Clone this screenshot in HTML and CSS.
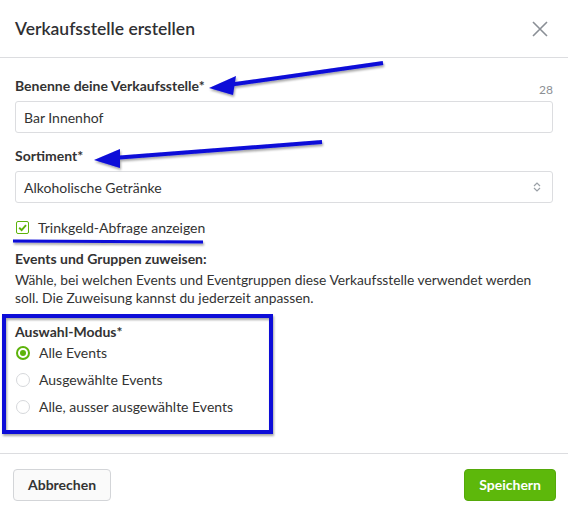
FILE: index.html
```html
<!doctype html>
<html>
<head>
    <meta charset="utf-8">
    <title>Verkaufsstelle erstellen</title>
    <link rel="stylesheet" href="styles.css">
</head>
<body>
<div class="modal">
    <div class="modal-header">
        <div class="modal-title">Verkaufsstelle erstellen</div>
        <button class="close" aria-label="Schliessen">
            <svg width="18" height="18" viewBox="0 0 18 18"><path d="M2 2L16 16M16 2L2 16" stroke="#8a8f96" stroke-width="1.6" fill="none"/></svg>
        </button>
    </div>

    <div class="modal-body">
        <div class="field">
            <div class="label-row">
                <label class="label" for="name">Benenne deine Verkaufsstelle*</label>
                <span class="counter">28</span>
            </div>
            <input class="input" id="name" type="text" value="Bar Innenhof">
        </div>

        <div class="field">
            <div class="label-row">
                <label class="label" for="sortiment">Sortiment*</label>
            </div>
            <div class="select">
                <span>Alkoholische Getränke</span>
                <svg width="8" height="12" viewBox="0 0 8 12"><path d="M1 5L4 2L7 5M1 7L4 10L7 7" stroke="#9aa0a6" stroke-width="1.2" fill="none"/></svg>
            </div>
        </div>

        <label class="check">
            <span class="checkbox">
                <svg width="11" height="11" viewBox="0 0 10 10"><path d="M2 5.2L4.2 7.3L8.2 2.8" stroke="#5db30a" stroke-width="1.7" fill="none"/></svg>
            </span>
            Trinkgeld-Abfrage anzeigen
        </label>

        <div class="section-title">Events und Gruppen zuweisen:</div>
        <p class="hint">Wähle, bei welchen Events und Eventgruppen diese Verkaufsstelle verwendet werden soll. Die Zuweisung kannst du jederzeit anpassen.</p>

        <div class="mode">
            <div class="section-title">Auswahl-Modus*</div>
            <label class="radio"><span class="dot checked"></span>Alle Events</label>
            <label class="radio"><span class="dot"></span>Ausgewählte Events</label>
            <label class="radio"><span class="dot"></span>Alle, ausser ausgewählte Events</label>
        </div>
    </div>

    <div class="modal-footer">
        <button class="btn">Abbrechen</button>
        <button class="btn btn-primary">Speichern</button>
    </div>

    <svg class="marks" width="568" height="515" viewBox="0 0 568 515">
        <defs>
            <filter id="shade" x="-10%" y="-10%" width="120%" height="130%">
                <feDropShadow dx="1" dy="2" stdDeviation="1.2" flood-color="#000" flood-opacity="0.35"/>
            </filter>
        </defs>
        <g fill="#0a0ad8" stroke="#0a0ad8" filter="url(#shade)">
            <line x1="383" y1="63" x2="228" y2="85" stroke-width="4"/>
            <polygon points="209,88 236,76 233,95" stroke="none"/>
            <line x1="322" y1="142" x2="113" y2="158" stroke-width="4"/>
            <polygon points="94,160 120,149 120,168" stroke="none"/>
            <line x1="13" y1="241" x2="203" y2="242" stroke-width="3"/>
            <rect x="4" y="316" width="267" height="116" fill="none" stroke-width="4"/>
        </g>
    </svg>
</div>
</body>
</html>
```

FILE: styles.css
```css
* {
    box-sizing: border-box;
}
body {
    margin: 0;
    background: #fff;
    font-family: Lato, "Open Sans", sans-serif;
    font-size: 14px;
    color: #333;
}
.modal {
    position: relative;
    width: 568px;
    height: 515px;
}
.modal-header {
    display: flex;
    align-items: center;
    justify-content: space-between;
    height: 58px;
    padding: 0 19px 0 15px;
    border-bottom: 1px solid #dcdde0;
}
.modal-title {
    font-size: 17.5px;
    font-weight: 600;
    color: #2f3033;
}
.close {
    border: 0;
    background: none;
    padding: 0;
    display: flex;
}
.modal-body {
    padding: 18px 15px 0 15px;
}
.field {
    margin-bottom: 13px;
}
.label-row {
    display: flex;
    justify-content: space-between;
    align-items: flex-end;
    height: 24px;
    margin-bottom: 1px;
}
.label {
    font-weight: 700;
    line-height: 18px;
    padding-bottom: 5px;
}
.counter {
    font-size: 12px;
    color: #8c8f94;
    line-height: 16px;
    padding-bottom: 2px;
}
.input,
.select {
    display: flex;
    align-items: center;
    justify-content: space-between;
    width: 100%;
    height: 32px;
    padding: 0 11px 0 8px;
    border: 1px solid #dcdde0;
    border-radius: 3px;
    font-family: inherit;
    font-size: 14px;
    color: #333;
    background: #fff;
}
.check {
    display: flex;
    align-items: center;
    gap: 9px;
    height: 18px;
    margin: 15px 0 13px 1px;
}
.checkbox {
    width: 13px;
    height: 13px;
    border: 1px solid #5db30a;
    border-radius: 2px;
    display: flex;
    align-items: center;
    justify-content: center;
}
.section-title {
    font-weight: 700;
    line-height: 20px;
}
.hint {
    margin: 2px 0 16px 0;
    font-size: 13.8px;
    line-height: 17.5px;
}
.mode .section-title {
    margin-bottom: -3px;
}
.radio {
    display: flex;
    align-items: center;
    gap: 9px;
    height: 27px;
    padding-left: 1px;
}
.dot {
    width: 14px;
    height: 14px;
    border: 1px solid #d6d8db;
    border-radius: 50%;
    display: flex;
    align-items: center;
    justify-content: center;
}
.dot.checked {
    border: 2px solid #5db30a;
}
.dot.checked::after {
    content: "";
    width: 6px;
    height: 6px;
    border-radius: 50%;
    background: #5db30a;
}
.modal-footer {
    position: absolute;
    left: 0;
    right: 0;
    bottom: 0;
    height: 62px;
    display: flex;
    align-items: center;
    justify-content: space-between;
    padding: 0 12px 0 13px;
    border-top: 1px solid #dcdde0;
}
.btn {
    height: 32px;
    padding: 0 14px;
    border: 1px solid #d3d5d8;
    border-radius: 4px;
    background: #fafafa;
    font-family: inherit;
    font-size: 14px;
    font-weight: 700;
    color: #333;
}
.btn-primary {
    background: #5db80b;
    border-color: #55a90a;
    color: #fff;
}
.marks {
    position: absolute;
    left: 0;
    top: 0;
    pointer-events: none;
}
```
